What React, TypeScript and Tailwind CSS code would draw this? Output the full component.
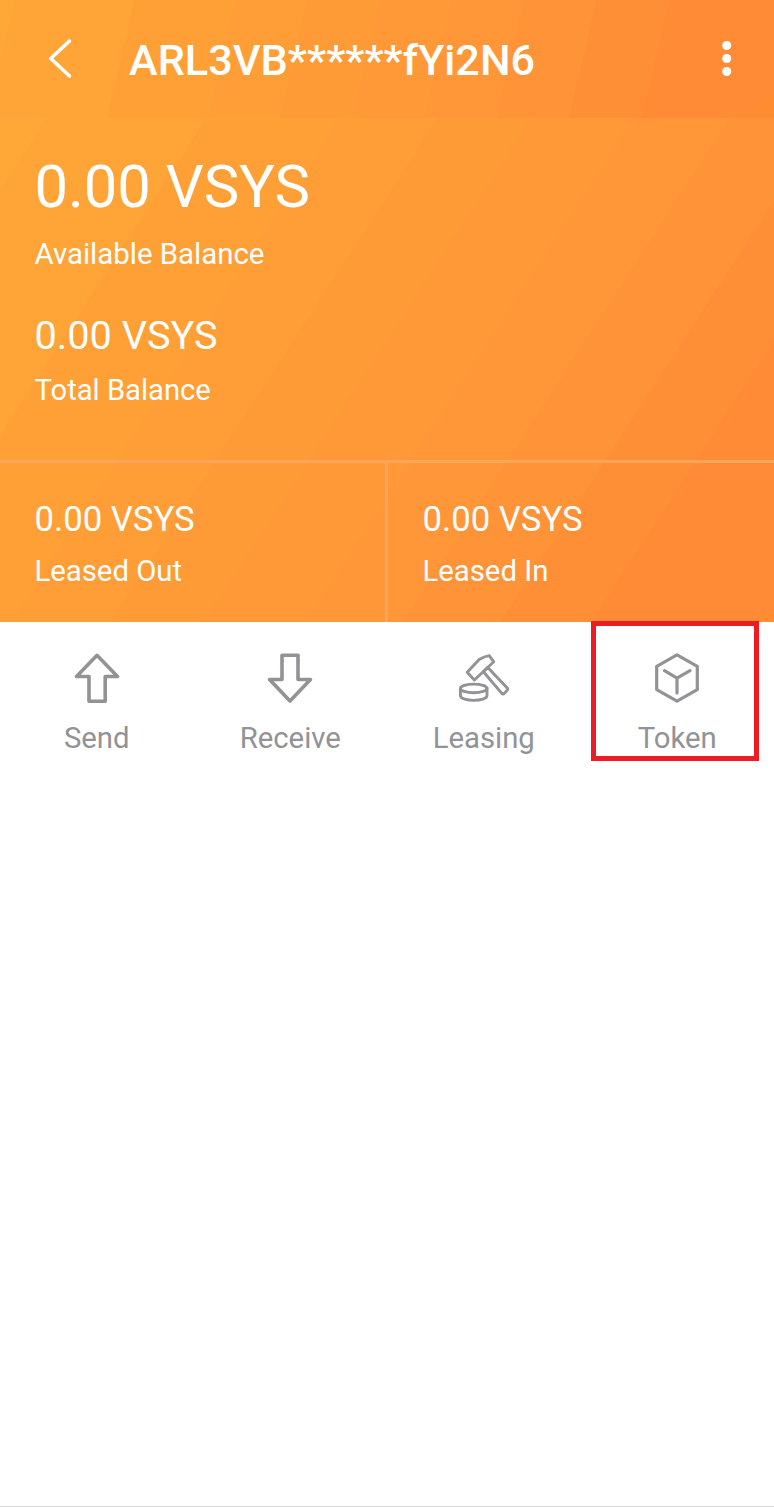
import type { ReactNode } from "react";

function Balance({ amount, label, amountClass, labelClass }: { amount: string; label: string; amountClass: string; labelClass: string }) {
  return (
    <div className="whitespace-nowrap">
      <div className={amountClass}>{amount}</div>
      <div className={labelClass}>{label}</div>
    </div>
  );
}

function Action({ label, children }: { label: string; children: ReactNode }) {
  return (
    <button className="flex flex-1 flex-col items-center pt-[26px] text-[#929297]">
      <svg width="60" height="60" viewBox="0 0 60 60" fill="none" stroke="currentColor" strokeWidth="3.6" strokeLinejoin="round" strokeLinecap="round">
        {children}
      </svg>
      <span className="mt-[10px] text-[29.3px] leading-10">{label}</span>
    </button>
  );
}

export default function App() {
  return (
    <div className="flex h-[1507px] w-[774px] flex-col border-b border-[#dcdcdc] bg-white font-['Roboto',sans-serif]">
      <header className="flex h-[118px] shrink-0 items-center bg-[radial-gradient(circle_at_786px_140px,#ff8c30_47px,transparent_48px),linear-gradient(103deg,#ffa737_14px,#ffa437_14px_131px,#ffa037_131px_229px,#ff9d37_229px_299px,#ff9b37_299px_370px,#ff9937_370px_440px,#ff9637_440px_510px,#ff9337_510px_581px,#ff8f37_581px_652px,#ff8b37_652px)] text-white">
        <svg className="ml-[42px] shrink-0" width="36" height="48" viewBox="0 0 36 48" fill="none" stroke="currentColor" strokeWidth="3.6" strokeLinecap="round" strokeLinejoin="round">
          <path d="M27.5 6 8.7 23.5 27.5 41" />
        </svg>
        <h1 className="ml-[51px] pt-[3px] text-[43.2px] font-medium leading-[50px]">ARL3VB******fYi2N6</h1>
        <svg className="ml-auto mr-[37px]" width="20" height="40" viewBox="0 0 20 40" fill="currentColor">
          <circle cx="9.7" cy="6.5" r="4.5" />
          <circle cx="9.7" cy="19.5" r="4.5" />
          <circle cx="9.7" cy="32.5" r="4.5" />
        </svg>
      </header>

      <section className="flex h-[504px] shrink-0 flex-col bg-[radial-gradient(circle_at_786px_538px,#ff8c30_47px,transparent_48px),linear-gradient(123deg,#ffa737_39px,#ffa437_39px_173px,#ffa037_173px_284px,#ff9d37_284px_367px,#ff9b37_367px_445px,#ff9937_445px_530px,#ff9637_530px_612px,#ff9337_612px_694px,#ff8f37_694px_770px,#ff8b37_770px)] text-white">
        <div className="flex h-[342px] flex-col gap-[42px] pl-[34.5px] pt-[34px]">
          <Balance amount="0.00 VSYS" label="Available Balance" amountClass="text-[59.7px] leading-[70px]" labelClass="mt-[14px] text-[29.4px] leading-9" />
          <Balance amount="0.00 VSYS" label="Total Balance" amountClass="text-[39.7px] leading-[44px]" labelClass="mt-[14px] text-[29.2px] leading-9" />
        </div>
        <div className="flex flex-1 border-t-[3px] border-[#ffa65b]">
          <div className="w-[388px] border-r-[3px] border-[#ffa65b] pl-[34.5px] pt-[35px]">
            <Balance amount="0.00 VSYS" label="Leased Out" amountClass="text-[34.7px] leading-[42px]" labelClass="mt-[13px] text-[29.3px] leading-9" />
          </div>
          <div className="pl-[34.5px] pt-[35px]">
            <Balance amount="0.00 VSYS" label="Leased In" amountClass="text-[34.7px] leading-[42px]" labelClass="mt-[13px] text-[29.3px] leading-9" />
          </div>
        </div>
      </section>

      <nav className="relative flex h-[146px] shrink-0">
        <Action label="Send">
          <path d="M30 7.3 50.5 28.5H38.2V53.2H22V28.5H9.5Z" />
        </Action>
        <Action label="Receive">
          <path d="M22 7.3H38V31.5H50.5L30 53 9.5 31.5H22Z" />
        </Action>
        <Action label="Leasing">
          <g strokeWidth="2.9">
            <path d="M13.2 24.3 20.4 32 39.8 13.8 35.2 7.6Q30 8.5 25.2 11.4Z" />
            <path d="M29.4 23.8 33.8 19.4 53.2 40Q54.2 41.2 53.2 42.3L50.2 45.4Q49 46.6 47.8 45.4Z" />
            <ellipse cx="19.7" cy="40.4" rx="13.3" ry="4.3" />
            <path d="M6.4 40.4V47.5C6.4 54 33 54 33 47.5V40.4" />
          </g>
        </Action>
        <Action label="Token">
          <g strokeWidth="3.2">
            <path d="M30 6.8 50.3 18.3V41.6L30 53.2 9.7 41.6V18.3Z" />
            <path d="M17.5 22.7 30 30.2 43 22.7M30 30.2V45" />
          </g>
        </Action>
        <div className="pointer-events-none absolute -top-px left-[591px] h-[140px] w-[168px] border-[5px] border-[#ed1c24]" />
      </nav>
    </div>
  );
}
